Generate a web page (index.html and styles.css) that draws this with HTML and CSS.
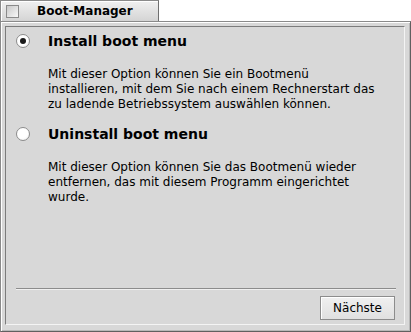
FILE: index.html
```html
<!DOCTYPE html>
<html lang="de">
<head>
    <meta charset="UTF-8">
    <title>Boot-Manager</title>
    <link rel="stylesheet" href="styles.css">
</head>
<body>
    <div class="tab">
        <span class="close-box"></span>
        <span class="tab-title">Boot-Manager</span>
    </div>
    <div class="frame">
        <div class="content">
            <div class="option">
                <span class="radio checked"></span>
                <div class="option-body">
                    <div class="option-title">Install boot menu</div>
                    <p class="option-text">Mit dieser Option können Sie ein Bootmenü<br>installieren, mit dem Sie nach einem Rechnerstart das<br>zu ladende Betriebssystem auswählen können.</p>
                </div>
            </div>
            <div class="option">
                <span class="radio"></span>
                <div class="option-body">
                    <div class="option-title">Uninstall boot menu</div>
                    <p class="option-text">Mit dieser Option können Sie das Bootmenü wieder<br>entfernen, das mit diesem Programm eingerichtet<br>wurde.</p>
                </div>
            </div>
            <div class="spacer"></div>
            <div class="separator"></div>
            <div class="buttons">
                <button class="button">Nächste</button>
            </div>
        </div>
    </div>
</body>
</html>
```

FILE: styles.css
```css
body {
    margin: 0;
    background: #fff;
    font-family: "DejaVu Sans", sans-serif;
    width: 411px;
    height: 332px;
    overflow: hidden;
}
.tab {
    width: 159px;
    height: 21px;
    box-sizing: border-box;
    display: flex;
    align-items: center;
    background: linear-gradient(to bottom, #f0f0f0, #d4d4d4);
    border: 1px solid #8a8a8a;
    border-bottom: none;
    border-right-color: #707070;
    box-shadow: inset 1px 1px #fff;
}
.close-box {
    width: 11px;
    height: 11px;
    margin-left: 5px;
    border: 1px solid #8a8a8a;
    background: linear-gradient(135deg, #c8c8c8, #f8f8f8);
}
.tab-title {
    margin-left: 18px;
    font-size: 12px;
    font-weight: bold;
    color: #000;
}
.frame {
    height: 311px;
    box-sizing: border-box;
    background: #d8d8d8;
    border: 1px solid #8a8a8a;
    border-right-color: #606060;
    border-bottom-color: #606060;
    box-shadow: inset 1px 1px #fff, inset -1px -1px #b8b8b8;
    padding: 4px 5px 6px 4px;
}
.content {
    height: 100%;
    box-sizing: border-box;
    border: 1px solid;
    border-color: #7c7c7c #f4f4f4 #f4f4f4 #7c7c7c;
    display: flex;
    flex-direction: column;
    padding: 5px 9px 4px 10px;
}
.option {
    display: flex;
    align-items: flex-start;
}
.radio {
    width: 12px;
    height: 12px;
    margin-top: 2px;
    border-radius: 50%;
    border: 1px solid #8c8c8c;
    background: radial-gradient(circle at 40% 35%, #fff 55%, #e6e6e6);
    display: flex;
    align-items: center;
    justify-content: center;
    flex-shrink: 0;
}
.radio.checked::after {
    content: "";
    width: 6px;
    height: 6px;
    border-radius: 50%;
    background: #1a1a1a;
}
.option-body {
    margin-left: 18px;
}
.option-title {
    font-size: 14px;
    font-weight: bold;
    color: #000;
    line-height: 18px;
}
.option-text {
    margin: 17px 0 13px;
    font-size: 12px;
    line-height: 15px;
    white-space: nowrap;
    color: #000;
}
.spacer {
    flex: 1;
}
.separator {
    height: 0;
    border-top: 1px solid #8c8c8c;
    border-bottom: 1px solid #f0f0f0;
    margin: 0 -1px 0 0;
}
.buttons {
    display: flex;
    justify-content: flex-end;
    margin-top: 6px;
}
.button {
    font-family: "DejaVu Sans", sans-serif;
    font-size: 12px;
    color: #000;
    width: 75px;
    height: 24px;
    padding: 0;
    background: linear-gradient(to bottom, #f0f0f0, #e0e0e0);
    border: 1px solid #8c8c8c;
    box-shadow: inset 1px 1px #fff;
    margin-right: 0;
}
```
